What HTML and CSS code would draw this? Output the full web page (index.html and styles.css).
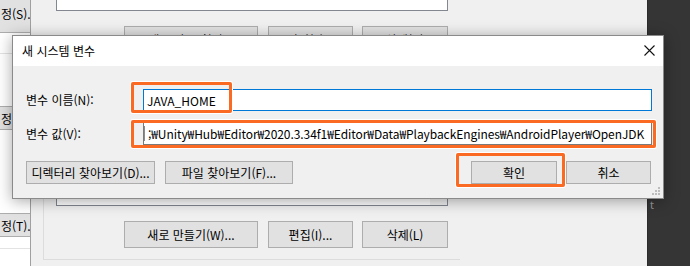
FILE: index.html
```html
<!DOCTYPE html>
<html lang="ko">
  <head>
    <meta charset="UTF-8" />
    <meta name="viewport" content="width=device-width, initial-scale=1.0" />
    <title>새 시스템 변수</title>
    <link rel="stylesheet" href="styles.css">
  </head>
  <body>
    <!-- 뒤쪽 환경 변수 창 -->
    <div class="desk">
      <div class="side">
        <div class="side-btn s1"><span>정(S).</span></div>
        <div class="side-sep"></div>
        <div class="side-btn s2"><span>정</span></div>
        <div class="side-btn s3"><span>정(T).</span></div>
        <div class="side-sep s4"></div>
      </div>

      <div class="main">
        <div class="upper">
          <div class="list list-top"></div>
          <div class="btn-row">
            <button class="btn bg-btn new">새로 만들기(N)...</button>
            <button class="btn bg-btn">편집(E)...</button>
            <button class="btn bg-btn del">삭제(D)</button>
          </div>
        </div>

        <div class="group">
          <div class="list list-bottom"><div class="corner"></div></div>
          <div class="btn-row">
            <button class="btn bg-btn new">새로 만들기(W)...</button>
            <button class="btn bg-btn">편집(I)...</button>
            <button class="btn bg-btn del">삭제(L)</button>
          </div>
        </div>
      </div>

      <div class="dark"><span class="stray">t</span></div>
    </div>

    <!-- 새 시스템 변수 대화 상자 -->
    <div class="dialog">
      <div class="titlebar">
        <span class="title">새 시스템 변수</span>
        <svg class="close" width="11" height="11" viewBox="0 0 11 11">
          <path d="M0.5 0.5 L10.5 10.5 M10.5 0.5 L0.5 10.5" stroke="#111" stroke-width="1.1" fill="none" />
        </svg>
      </div>

      <div class="dialog-body">
        <div class="field">
          <label class="label">변수 이름(N):</label>
          <div class="input focused">JAVA_HOME</div>
        </div>
        <div class="field second">
          <label class="label">변수 값(V):</label>
          <div class="input value"><span class="caret"></span>;₩Unity₩Hub₩Editor₩2020.3.34f1₩Editor₩Data₩PlaybackEngines₩AndroidPlayer₩OpenJDK</div>
        </div>
        <div class="actions">
          <button class="btn dir">디렉터리 찾아보기(D)...</button>
          <button class="btn file">파일 찾아보기(F)...</button>
          <div class="spacer"></div>
          <button class="btn ok">확인</button>
          <button class="btn cancel">취소</button>
        </div>
      </div>

      <svg class="grip" width="9" height="9" viewBox="0 0 9 9">
        <rect x="7" y="0" width="2" height="2" fill="#bdbdbd" />
        <rect x="4" y="3" width="2" height="2" fill="#bdbdbd" />
        <rect x="7" y="3" width="2" height="2" fill="#bdbdbd" />
        <rect x="1" y="6" width="2" height="2" fill="#bdbdbd" />
        <rect x="4" y="6" width="2" height="2" fill="#bdbdbd" />
        <rect x="7" y="6" width="2" height="2" fill="#bdbdbd" />
      </svg>
    </div>

    <!-- 강조 표시 -->
    <div class="mark m1"></div>
    <div class="mark m2"></div>
    <div class="mark m3"></div>
  </body>
</html>
```

FILE: styles.css
```css
body {
  margin: 0;
  padding: 0;
  width: 690px;
  height: 266px;
  overflow: hidden;
  font-family: "Noto Sans CJK KR", "Noto Sans", sans-serif;
  font-size: 12px;
  color: #000;
  background-color: #353535;
}

.btn {
  font-family: "Noto Sans CJK KR", "Noto Sans", sans-serif;
  font-size: 12px;
  color: #000;
  background-color: #e1e1e1;
  border: 1px solid #adadad;
  padding: 0;
  margin: 0;
  white-space: nowrap;
  box-sizing: border-box;
}

/* 뒤쪽 창 */
.desk {
  display: flex;
  height: 266px;
}

.side {
  width: 30px;
  border-right: 1px solid #a0a0a0;
  background: #ffffff;
  overflow: hidden;
  display: flex;
  flex-direction: column;
}

.side-btn {
  display: flex;
  align-items: center;
  height: 24px;
  padding-left: 1px;
  box-sizing: border-box;
  background-color: #e1e1e1;
  border-top: 1px solid #adadad;
  border-bottom: 1px solid #adadad;
  white-space: nowrap;
}

.side-btn.s1 {
  height: 33px;
  border-top: none;
  padding-bottom: 6px;
}

.side-btn.s2 {
  margin-top: 52px;
}

.side-btn.s3 {
  margin-top: 83px;
}

.side-sep {
  height: 21px;
  box-sizing: border-box;
  border-bottom: 1px solid #e3e3e3;
}

.side-sep.s4 {
  height: 12px;
}

.main {
  width: 616px;
  background-color: #f0f0f0;
  display: flex;
  flex-direction: column;
}

.upper {
  padding-left: 25px;
  width: 392px;
}

.list {
  background: #ffffff;
  border: 1px solid #828790;
  box-sizing: border-box;
  position: relative;
}

.list-top {
  height: 11px;
  border-top: none;
}

.list-bottom {
  height: 126px;
}

.corner {
  position: absolute;
  right: 0;
  bottom: 0;
  width: 17px;
  height: 17px;
  background: #f0f0f0;
}

.btn-row {
  display: flex;
  justify-content: flex-end;
  gap: 10px;
  margin-top: 15px;
}

.btn-row .bg-btn {
  height: 27px;
}

.bg-btn.new {
  width: 134px;
}

.bg-btn {
  width: 85px;
}

.bg-btn.del {
  width: 86px;
  margin-left: -1px;
}

.group {
  margin-left: 12px;
  margin-top: 27px;
  width: 404px;
  padding-left: 12px;
  padding-bottom: 11px;
  border-left: 1px solid #dcdcdc;
  border-bottom: 1px solid #dcdcdc;
}

.group .list,
.group .btn-row {
  width: 392px;
}

.dark {
  flex: 1;
  background-color: #353535;
  border-left: 1px solid #2c2c2c;
  position: relative;
}

.stray {
  position: absolute;
  left: 2px;
  top: 197px;
  color: #9a9a9a;
  font-family: "Noto Sans", sans-serif;
  font-size: 11px;
}

/* 대화 상자 */
.dialog {
  position: absolute;
  left: 12px;
  top: 35px;
  width: 652px;
  height: 164px;
  box-sizing: border-box;
  border: 1px solid #8a8a8a;
  background-color: #f0f0f0;
  box-shadow: 0 2px 14px rgba(0, 0, 0, 0.35);
}

.titlebar {
  height: 30px;
  background: #ffffff;
  display: flex;
  align-items: center;
  justify-content: space-between;
  padding-left: 9px;
  padding-right: 8px;
}

.title {
  margin-top: -1px;
}

.close {
  margin-top: -2px;
}

.dialog-body {
  padding: 23px 11px 0 13px;
}

.field {
  display: flex;
  align-items: center;
  height: 22px;
}

.field.second {
  margin-top: 11px;
  height: 23px;
}

.label {
  width: 117px;
  margin-top: -1px;
}

.input {
  flex: 1;
  height: 100%;
  box-sizing: border-box;
  background: #ffffff;
  border: 1px solid #7a7a7a;
  display: flex;
  align-items: center;
  padding-left: 3px;
  white-space: nowrap;
  overflow: hidden;
}

.input.focused {
  border-color: #0078d7;
}

.input.value {
  padding-left: 0;
  letter-spacing: -0.07px;
}

.caret {
  width: 1px;
  height: 15px;
  background: #8c8c8c;
  margin-right: 3px;
}

.actions {
  display: flex;
  margin-top: 16px;
  padding-right: 1px;
}

.actions .btn {
  height: 23px;
}

.btn.dir {
  width: 129px;
}

.btn.file {
  width: 128px;
  margin-left: 10px;
}

.spacer {
  flex: 1;
}

.btn.ok {
  width: 86px;
}

.btn.cancel {
  width: 85px;
  margin-left: 9px;
}

.grip {
  position: absolute;
  right: 3px;
  bottom: 2px;
}

/* 주황색 강조 */
.mark {
  position: absolute;
  box-sizing: border-box;
  border: 3px solid #fb6a22;
  border-radius: 2px;
  box-shadow: 0 0 0 1px #ffffff;
}

.m1 {
  left: 131px;
  top: 82px;
  width: 101px;
  height: 31px;
}

.m2 {
  left: 131px;
  top: 120px;
  width: 525px;
  height: 28px;
}

.m3 {
  left: 456px;
  top: 153px;
  width: 109px;
  height: 34px;
}
```
